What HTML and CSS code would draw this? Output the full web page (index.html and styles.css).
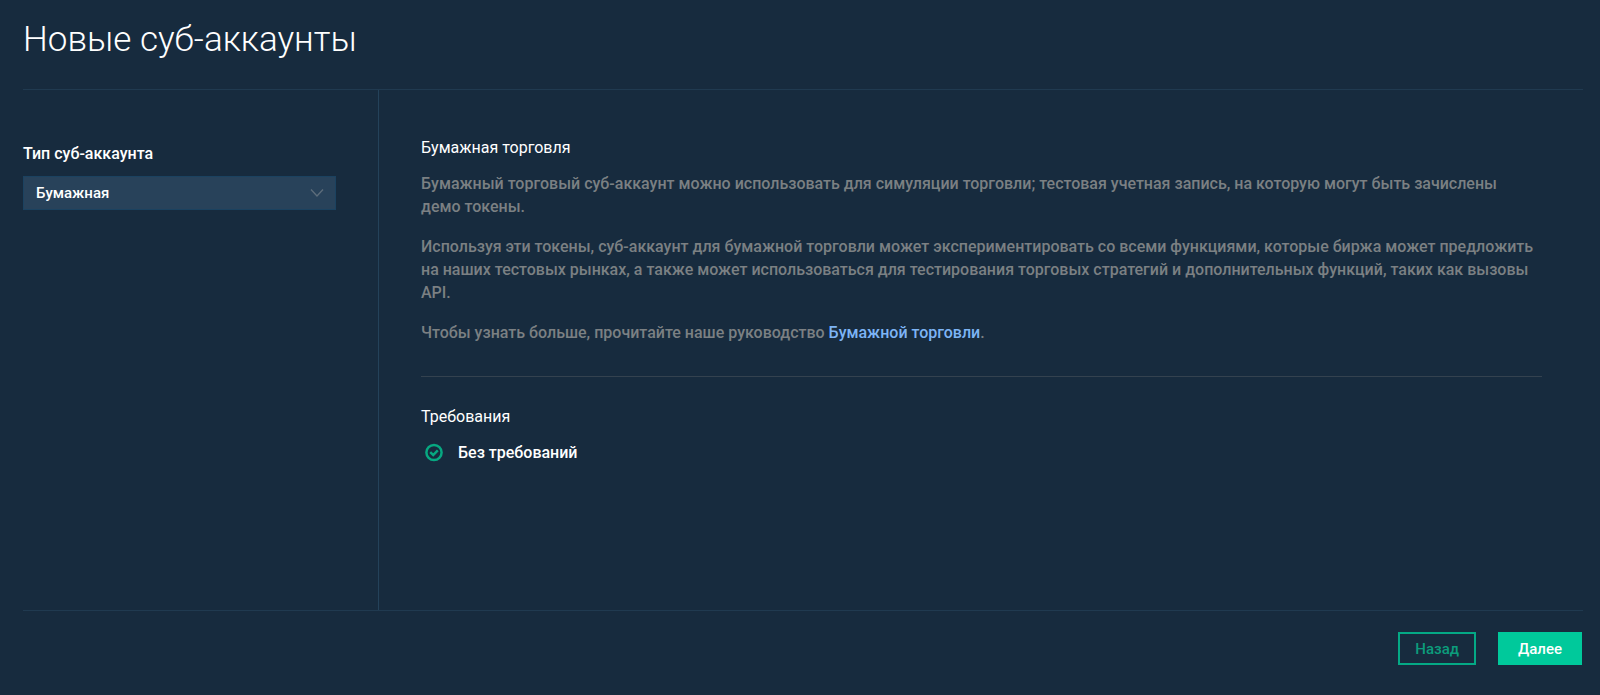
FILE: index.html
```html
<!DOCTYPE html>
<html lang="ru">
<head>
<meta charset="utf-8">
<meta name="viewport" content="width=device-width, initial-scale=1">
<title>Новые суб-аккаунты</title>
<link rel="stylesheet" href="styles.css">
</head>
<body>
<form class="page">
  <header class="header">
    <h1 class="title">Новые суб-аккаунты</h1>
  </header>
  <div class="content">
    <aside class="sidebar">
      <label class="label" for="account-type">Тип суб-аккаунта</label>
      <div class="select-wrap">
        <select class="select" id="account-type">
          <option>Бумажная</option>
        </select>
        <svg class="chevron" viewBox="0 0 14 10" aria-hidden="true"><path d="M1 1.500 7 8l6-6.500"/></svg>
      </div>
    </aside>
    <main class="details">
      <section class="about">
        <h2 class="subtitle">Бумажная торговля</h2>
        <p class="text">Бумажный торговый суб-аккаунт можно использовать для симуляции торговли; тестовая учетная запись, на которую могут быть зачислены демо токены.</p>
        <p class="text">Используя эти токены, суб-аккаунт для бумажной торговли может экспериментировать со всеми функциями, которые биржа может предложить на наших тестовых рынках, а также может использоваться для тестирования торговых стратегий и дополнительных функций, таких как вызовы API.</p>
        <p class="text">Чтобы узнать больше, прочитайте наше руководство <a class="link" href="#guide">Бумажной торговли</a>.</p>
      </section>
      <section class="requirements">
        <h2 class="subtitle">Требования</h2>
        <ul class="list">
          <li class="item">
            <svg class="check" viewBox="0 0 18 18" aria-hidden="true"><circle cx="9" cy="8.500" r="7.600"/><path d="M5.200 8.200 8.200 11 12.800 6.300"/></svg>
            <span>Без требований</span>
          </li>
        </ul>
      </section>
    </main>
  </div>
  <footer class="footer">
    <button class="button button-outline" type="button">Назад</button>
    <button class="button button-primary" type="button">Далее</button>
  </footer>
</form>
</body>
</html>
```

FILE: styles.css
```css
* {
  box-sizing: border-box;
}

body {
  margin: 0;
  background: #172b3e;
  color: #fff;
  font-family: Roboto, "Open Sans", sans-serif;
  font-size: 16px;
}

.page {
  display: flex;
  flex-direction: column;
  min-height: 100vh;
  padding: 0 17px 0 23px;
}

.header {
  padding: 16px 0 25px;
  border-bottom: 1px solid #203a50;
}

.title {
  margin: 0;
  font-size: 35px;
  font-weight: 300;
  line-height: 48px;
}

.content {
  display: flex;
  flex: 1;
}

.sidebar {
  flex: 0 0 356px;
  padding: 52px 42px 24px 0;
  border-right: 1px solid #24425a;
}

.label {
  display: block;
  margin-bottom: 10px;
  font-weight: 500;
  line-height: 24px;
}

.select-wrap {
  position: relative;
}

.select {
  display: block;
  width: 100%;
  height: 34px;
  padding: 0 36px 0 12px;
  border: 1px solid #1b4260;
  border-radius: 0;
  background: #28425a;
  color: #fff;
  font: inherit;
  font-size: 15px;
  font-weight: 500;
  appearance: none;
}

.chevron {
  position: absolute;
  top: 12px;
  right: 12px;
  width: 14px;
  height: 10px;
  fill: none;
  stroke: #5d6d7b;
  stroke-width: 1.3;
  pointer-events: none;
}

.details {
  flex: 1;
  min-width: 0;
  padding: 46px 41px 24px 42px;
}

.about {
  padding-bottom: 15px;
  border-bottom: 1px solid #34424f;
}

.requirements {
  padding-top: 28px;
}

.subtitle {
  margin: 0 0 12px;
  font-size: 16px;
  font-weight: 400;
  line-height: 24px;
}

.text {
  margin: 0 0 17px;
  padding-right: 4px;
  color: #7b8083;
  font-weight: 500;
  line-height: 23px;
}

.link {
  color: #7db4f5;
  font-weight: 500;
  text-decoration: none;
}

.list {
  margin: 0;
  padding: 0;
  list-style: none;
}

.item {
  display: flex;
  align-items: center;
  gap: 15px;
  padding-left: 4px;
  font-weight: 500;
  line-height: 24px;
}

.check {
  width: 18px;
  height: 18px;
  fill: none;
  stroke: #07a881;
  stroke-width: 2.500;
  overflow: visible;
}

.footer {
  display: flex;
  justify-content: flex-end;
  gap: 22px;
  padding: 21px 1px 30px 0;
  border-top: 1px solid #203a50;
}

.button {
  height: 33px;
  padding: 0 15px;
  border: 2px solid #04a985;
  border-radius: 0;
  font: inherit;
  font-size: 15px;
  font-weight: 500;
  cursor: pointer;
}

.button-outline {
  background: transparent;
  color: #0c9c7c;
}

.button-primary {
  padding: 0 18px;
  border-color: #00c99b;
  background: #00c99b;
  color: #fff;
}
```
